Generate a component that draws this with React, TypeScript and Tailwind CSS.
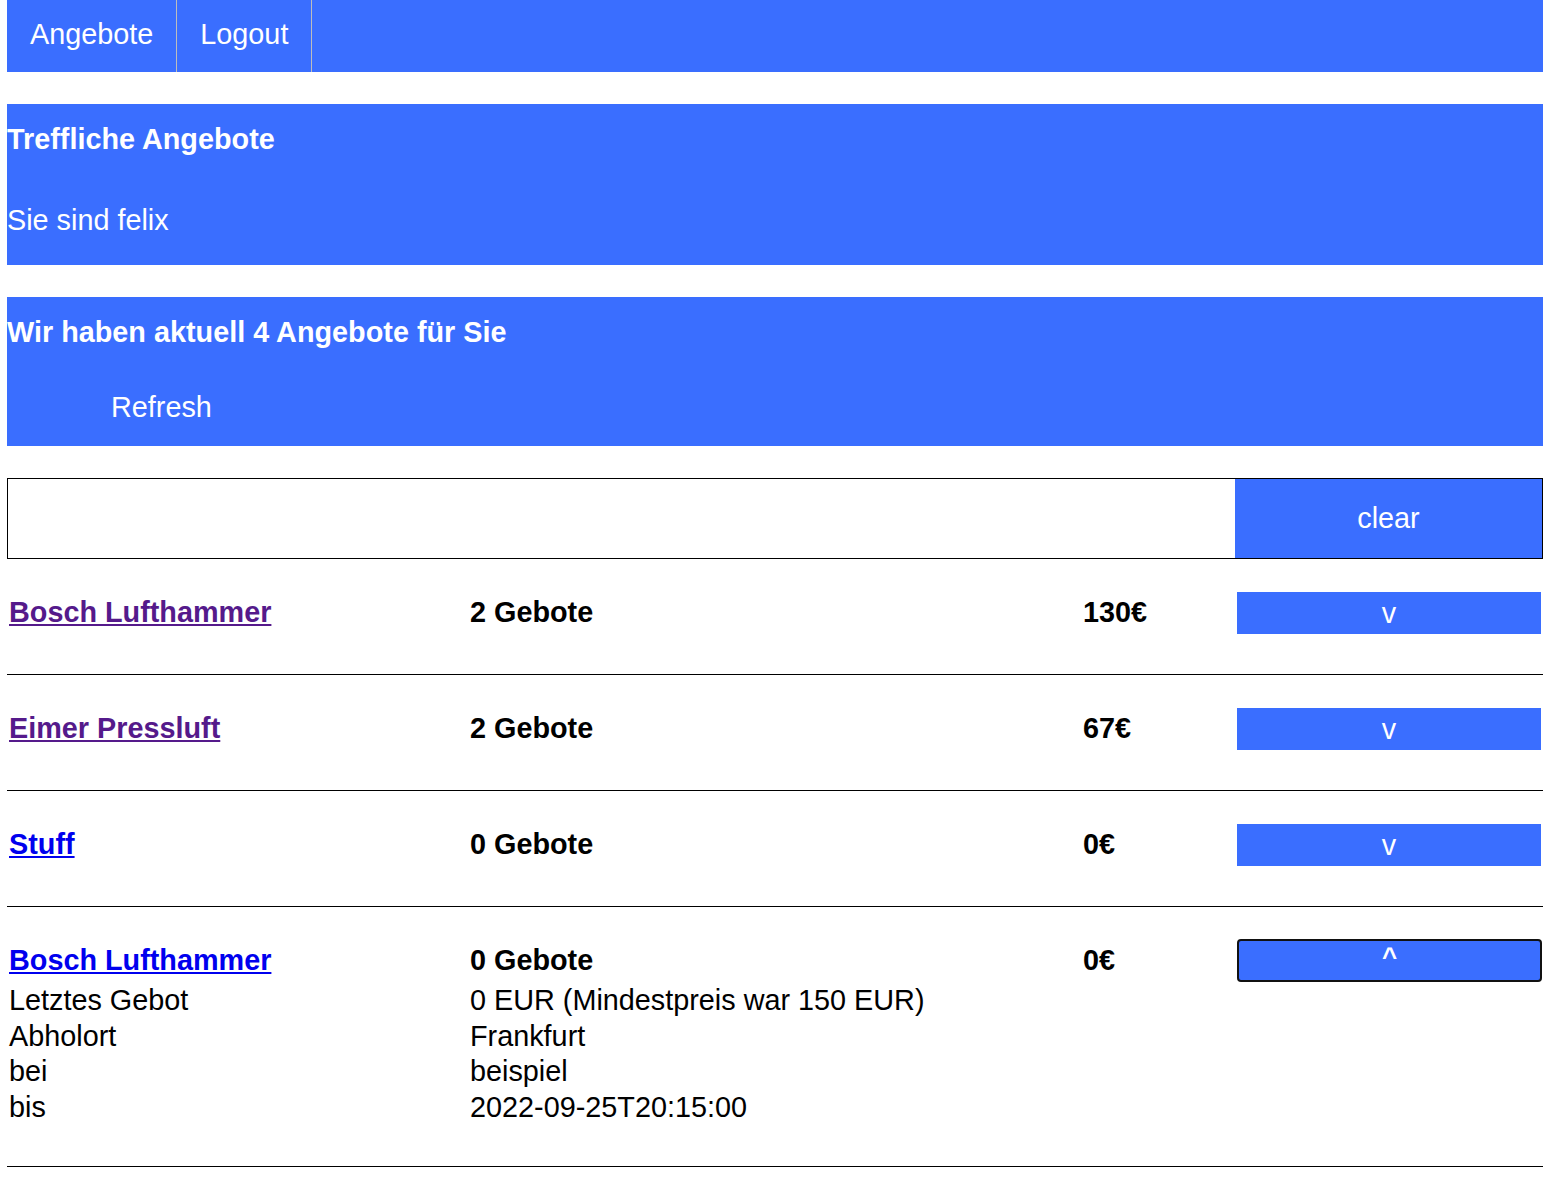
import React from "react";

type Offer = {
  name: string;
  bids: string;
  price: string;
  visited: boolean;
  open?: boolean;
};

const offers: Offer[] = [
  { name: "Bosch Lufthammer", bids: "2 Gebote", price: "130€", visited: true },
  { name: "Eimer Pressluft", bids: "2 Gebote", price: "67€", visited: true },
  { name: "Stuff", bids: "0 Gebote", price: "0€", visited: false },
  { name: "Bosch Lufthammer", bids: "0 Gebote", price: "0€", visited: false, open: true },
];

const details: [string, string][] = [
  ["Letztes Gebot", "0 EUR (Mindestpreis war 150 EUR)"],
  ["Abholort", "Frankfurt"],
  ["bei", "beispiel"],
  ["bis", "2022-09-25T20:15:00"],
];

function OfferRow({ o }: { o: Offer }) {
  return (
    <div className="border-b border-black pt-[33px] pb-[40px]">
      <div className="flex items-start pl-[2px]">
        <div className="w-[461px] pt-[4px]">
          <a
            href="#"
            className={
              "font-bold underline " +
              (o.visited ? "text-[#551a8b]" : "text-[#0000ee]")
            }
          >
            {o.name}
          </a>
        </div>
        <div className="w-[613px] pt-[4px] font-bold">{o.bids}</div>
        <div className="w-[154px] pt-[4px] font-bold">{o.price}</div>
        {o.open ? (
          <button className="w-[305px] h-[43px] -mt-[1px] bg-[#3a6eff] text-white border-2 border-[#111] rounded-[4px] flex items-start justify-center leading-[33px] pt-0 font-bold text-[26px]">
            ^
          </button>
        ) : (
          <button className="w-[304px] h-[42px] bg-[#3a6eff] text-white flex items-center justify-center leading-[33px]">
            v
          </button>
        )}
      </div>
      {o.open && (
        <div className="pl-[2px] leading-[35.7px] pt-[1px]">
          {details.map(([k, v]) => (
            <div key={k} className="flex">
              <div className="w-[461px]">{k}</div>
              <div>{v}</div>
            </div>
          ))}
        </div>
      )}
    </div>
  );
}

export default function App() {
  return (
    <div
      className="px-[7px] text-[28.8px] leading-[33px] text-black bg-white min-h-[1194px]"
      style={{ fontFamily: '"Liberation Sans", Arial, sans-serif' }}
    >
      <nav className="flex h-[72px] bg-[#3a6eff] text-white">
        <a href="#" className="px-[23px] pt-[18px] border-r border-[#bdbdbd]">
          Angebote
        </a>
        <a href="#" className="px-[23px] pt-[18px] border-r border-[#bdbdbd]">
          Logout
        </a>
      </nav>

      <section className="mt-[32px] bg-[#3a6eff] text-white pt-[19px] pb-[28px]">
        <h1 className="font-bold">Treffliche Angebote</h1>
        <p className="mt-[48px]">Sie sind felix</p>
      </section>

      <section className="mt-[32px] bg-[#3a6eff] text-white pt-[19px] pb-[22px]">
        <h2 className="font-bold">Wir haben aktuell 4 Angebote für Sie</h2>
        <div className="mt-[42px]">
          <button className="ml-[104px] text-white bg-transparent leading-[33px]">
            Refresh
          </button>
        </div>
      </section>

      <div className="mt-[32px] flex h-[81px] border border-black">
        <input className="flex-1 min-w-0 outline-none bg-white" />
        <button className="w-[307px] bg-[#3a6eff] text-white">clear</button>
      </div>

      <div>
        {offers.map((o, i) => (
          <OfferRow key={i} o={o} />
        ))}
      </div>
    </div>
  );
}
